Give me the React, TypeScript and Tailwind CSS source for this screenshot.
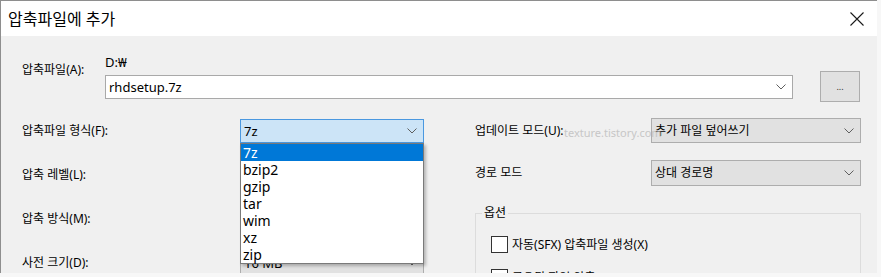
import React from "react";

const FONT = "font-['Noto_Sans','Noto_Sans_CJK_KR',sans-serif]";

const FORMATS = ["7z", "bzip2", "gzip", "tar", "wim", "xz", "zip"];

function Chevron() {
  return (
    <svg width="10" height="6" viewBox="0 0 10 6" className="shrink-0">
      <polyline points="0.5,0.5 5,5 9.5,0.5" fill="none" stroke="#5f5f5f" strokeWidth="1" />
    </svg>
  );
}

type ComboProps = {
  value: string;
  width: string;
  height?: string;
  variant?: "edit" | "gray" | "focus";
  textSize?: string;
};

function Combo({ value, width, height = "h-[24px]", variant = "gray", textSize = "text-[13px]" }: ComboProps) {
  const tone =
    variant === "edit"
      ? "bg-white border-[#a9a9a9]"
      : variant === "focus"
        ? "bg-[#cce4f7] border-[#4a98e0]"
        : "bg-[#e1e1e1] border-[#adadad]";
  return (
    <div className={`flex ${width} ${height} shrink-0 items-center justify-between border ${tone} pl-[3px] pr-[6px]`}>
      <span className={`${textSize} leading-none text-black`}>{value}</span>
      <Chevron />
    </div>
  );
}

function LeftRow({ label, children }: { label: string; children: React.ReactNode }) {
  return (
    <div className="flex h-[24px] items-center">
      <span className="w-[218px] text-[12px] leading-[16px] text-black">{label}</span>
      {children}
    </div>
  );
}

export default function App() {
  return (
    <div className={`h-[277px] w-[881px] overflow-hidden bg-[#f7f7f7] ${FONT}`}>
      <div className="relative flex h-[273px] w-[877px] flex-col overflow-hidden border-l border-t border-[#8e8e8e] bg-[#f0f0f0]">
        {/* title bar */}
        <div className="flex h-[35px] shrink-0 items-center justify-between bg-white pl-[7px] pr-[13px]">
          <span className="text-[16px] leading-none text-black">압축파일에 추가</span>
          <svg width="14" height="14" viewBox="0 0 14 14">
            <path d="M0.5 0.5 L13.5 13.5 M13.5 0.5 L0.5 13.5" stroke="#1a1a1a" strokeWidth="1.1" />
          </svg>
        </div>

        <div className="flex flex-col pl-[21px] pt-[18px]">
          {/* archive path row */}
          <div className="flex items-start">
            <span className="mt-[8px] w-[83px] text-[12px] leading-[16px] text-black">압축파일(A):</span>
            <div className="flex w-[688px] flex-col">
              <span className="text-[13px] leading-[16px] text-black">D:₩</span>
              <div className="mt-[5px]">
                <Combo value="rhdsetup.7z" width="w-[688px]" variant="edit" />
              </div>
            </div>
            <button
              type="button"
              className="ml-[27px] mt-[17px] flex h-[31px] w-[40px] items-center justify-center border border-[#adadad] bg-[#e1e1e1] text-[9px] leading-none text-[#333]"
            >
              ...
            </button>
          </div>

          <div className="mt-[16px] flex items-start">
            {/* left column */}
            <div className="flex flex-col gap-[20px] pt-[1px]">
              <LeftRow label="압축파일 형식(F):">
                <div className="relative">
                  <Combo value="7z" width="w-[184px]" variant="focus" />
                  <ul className="absolute left-0 top-full z-10 w-[184px] border border-[#7a7a7a] bg-white shadow-[2px_2px_3px_rgba(0,0,0,0.25)]">
                    {FORMATS.map((format, index) => (
                      <li
                        key={format}
                        className={`h-[17px] pl-[2px] text-[14px] leading-[17px] ${
                          index === 0 ? "bg-[#0078d7] text-white" : "text-black"
                        }`}
                      >
                        {format}
                      </li>
                    ))}
                  </ul>
                </div>
              </LeftRow>
              <LeftRow label="압축 레벨(L):">
                <Combo value="표준" width="w-[184px]" />
              </LeftRow>
              <LeftRow label="압축 방식(M):">
                <Combo value="LZMA2" width="w-[184px]" />
              </LeftRow>
              <LeftRow label="사전 크기(D):">
                <Combo value="16 MB" width="w-[184px]" />
              </LeftRow>
            </div>

            {/* right column */}
            <div className="ml-[51px] flex flex-col">
              <div className="flex h-[25px] items-center">
                <span className="w-[176px] text-[12px] leading-[16px] text-black">업데이트 모드(U):</span>
                <Combo value="추가 파일 덮어쓰기" width="w-[210px]" height="h-[25px]" textSize="text-[12px]" />
              </div>
              <div className="mt-[17px] flex h-[26px] items-center">
                <span className="w-[176px] text-[12px] leading-[16px] text-black">경로 모드</span>
                <Combo value="상대 경로명" width="w-[210px]" height="h-[26px]" textSize="text-[12px]" />
              </div>
              <fieldset className="mt-[19px] h-[90px] w-[386px] border border-[#dcdcdc] pl-[6px]">
                <legend className="px-[2px] text-[12px] leading-[16px] text-black">옵션</legend>
                <div className="mt-[15px] flex flex-col gap-[16px] pl-[9px]">
                  <label className="flex items-center gap-[4px]">
                    <span className="h-[17px] w-[17px] border border-[#333] bg-white" />
                    <span className="text-[12px] leading-[16px] text-black">자동(SFX) 압축파일 생성(X)</span>
                  </label>
                  <label className="flex items-center gap-[4px]">
                    <span className="h-[17px] w-[17px] border border-[#333] bg-white" />
                    <span className="text-[12px] leading-[16px] text-black">공유된 파일 압축(W)</span>
                  </label>
                </div>
              </fieldset>
            </div>
          </div>
        </div>

        {/* blog watermark */}
        <span className="pointer-events-none absolute left-[563px] top-[124px] z-20 text-[11px] leading-[16px] text-[#bdbdbd] opacity-80">
          texture.tistory.com
        </span>
      </div>
    </div>
  );
}
